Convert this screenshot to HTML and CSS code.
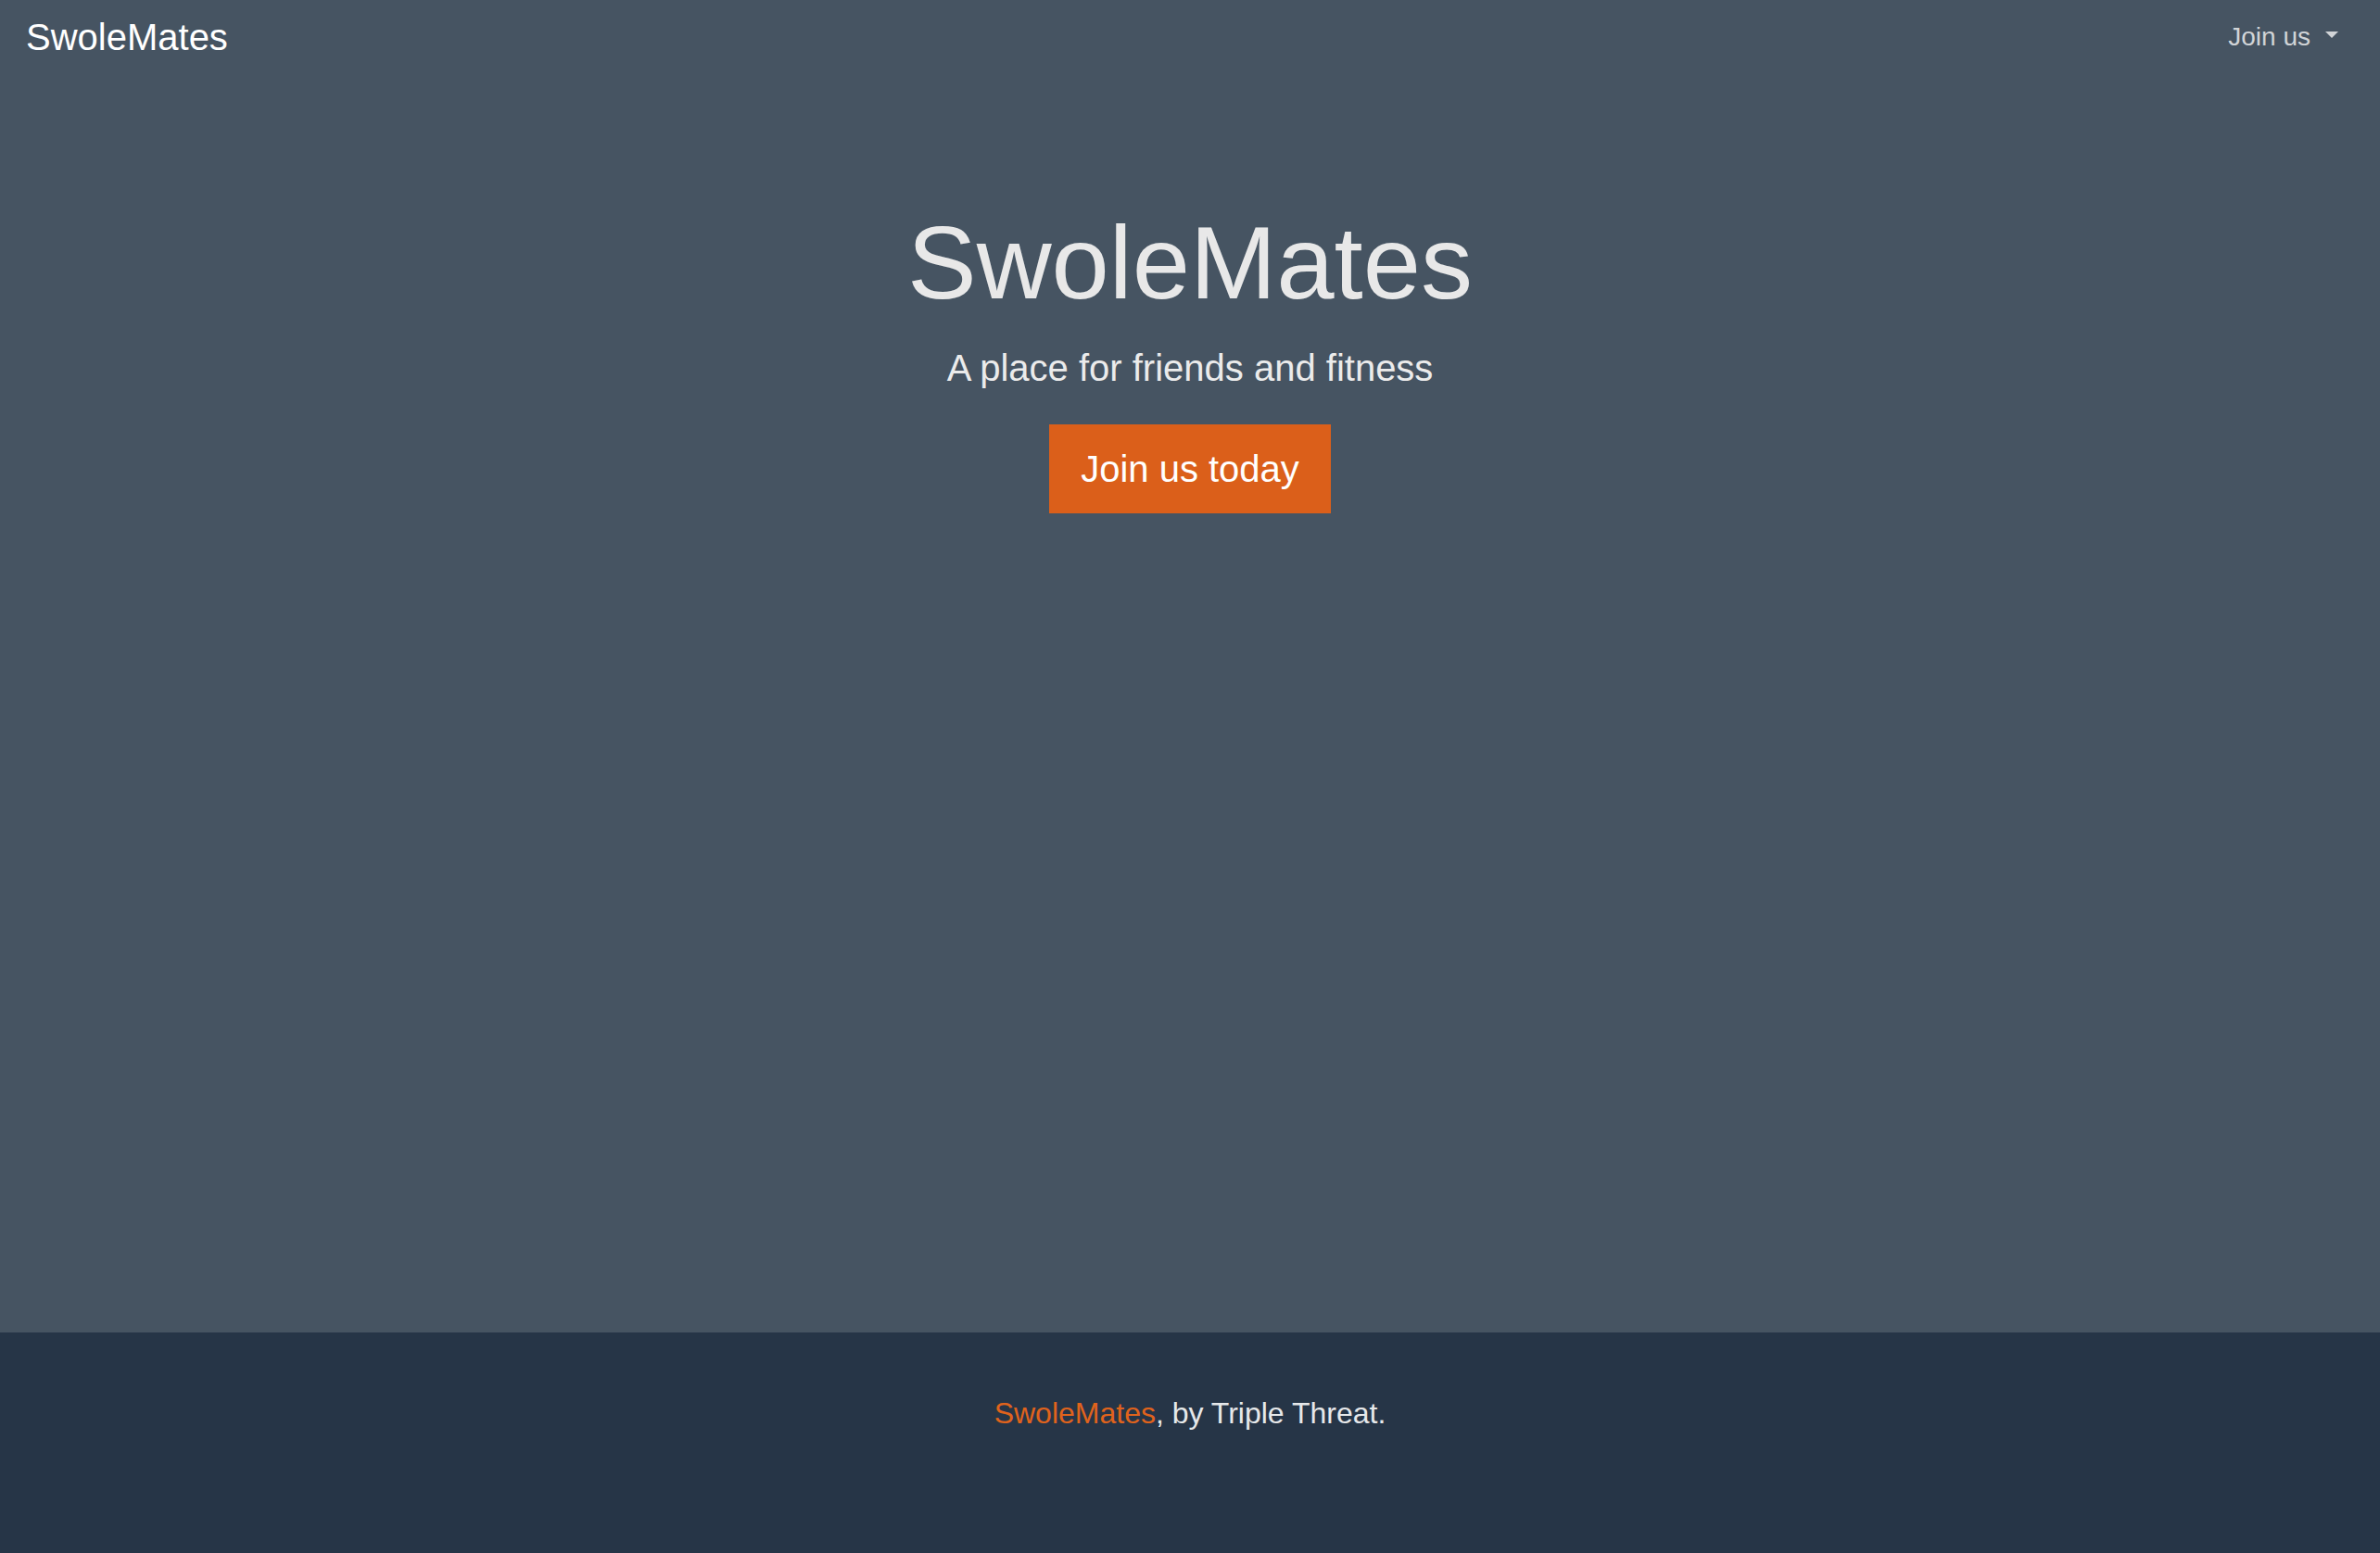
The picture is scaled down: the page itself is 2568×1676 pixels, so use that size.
FILE: index.html
```html
<!DOCTYPE html>
<html lang="en">
<head>
<meta charset="utf-8">
<title>SwoleMates</title>
<link rel="stylesheet" href="styles.css">
</head>
<body>
<div class="page">
  <header class="navbar">
    <a class="brand" href="#">SwoleMates</a>
    <a class="nav-link" href="#">Join us<span class="caret"></span></a>
  </header>
  <main class="hero">
    <h1 class="hero-title">SwoleMates</h1>
    <p class="lead">A place for friends and fitness</p>
    <a class="btn-cta" href="#">Join us today</a>
  </main>
  <footer class="footer">
    <p class="footer-text"><a class="footer-link" href="#">SwoleMates</a>, by Triple Threat.</p>
  </footer>
</div>
</body>
</html>
```

FILE: styles.css
```css
* { box-sizing: border-box; }
html, body { margin: 0; padding: 0; }
body {
  font-family: "Liberation Sans", Arial, Helvetica, sans-serif;
  font-size: 32px;
  line-height: 1.5;
  background: #465462;
  color: #e8e8e8;
}
a { text-decoration: none; }
.page {
  min-height: 100vh;
  display: flex;
  flex-direction: column;
}
.navbar {
  display: flex;
  justify-content: space-between;
  align-items: center;
  height: 78px;
  padding: 2px 45px 0 28px;
}
.brand {
  font-size: 40px;
  line-height: 60px;
  color: #ffffff;
}
.nav-link {
  font-size: 28px;
  line-height: 42px;
  color: #d1d4d7;
  display: inline-flex;
  align-items: baseline;
}
.caret {
  display: inline-block;
  width: 0;
  height: 0;
  margin-left: 16px;
  border-top: 7px solid #d1d4d7;
  border-left: 7.5px solid transparent;
  border-right: 7.5px solid transparent;
  position: relative;
  top: -8px;
}
.hero {
  flex: 1;
  display: flex;
  flex-direction: column;
  align-items: center;
  padding-top: 139px;
}
.hero-title {
  margin: 0 0 16px;
  font-size: 112px;
  line-height: 1.2;
  font-weight: 400;
  color: #e8e8e8;
}
.lead {
  margin: 0 0 31px;
  font-size: 40px;
  line-height: 60px;
  color: #ebebeb;
}
.btn-cta {
  display: inline-block;
  background: #db5f1a;
  border: 2px solid #db5f1a;
  color: #ffffff;
  font-size: 40px;
  line-height: 60px;
  padding: 16px 32px;
}
.footer {
  background: #263547;
  padding: 63px 0 127px;
  text-align: center;
}
.footer-text {
  margin: 0;
  font-size: 32px;
  line-height: 48px;
  color: #e6e8ea;
}
.footer-link { color: #e0631c; }
```
